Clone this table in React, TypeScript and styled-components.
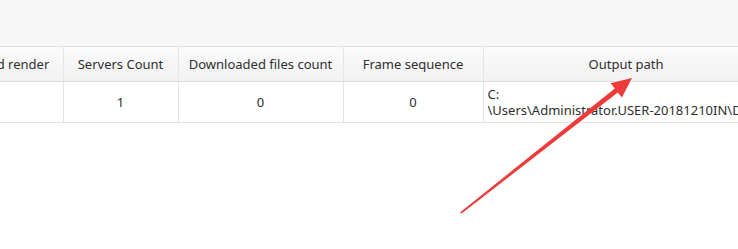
import styled, { createGlobalStyle } from "styled-components";

const GlobalStyle = createGlobalStyle`
  html, body {
    margin: 0;
    padding: 0;
    background: #ffffff;
  }
  body {
    font-family: "Noto Sans", "Open Sans", Arial, sans-serif;
    color: #333333;
  }
`;

const Page = styled.div`
  position: relative;
  width: 738px;
  height: 249px;
  overflow: hidden;
  background: #ffffff;
`;

const Toolbar = styled.div`
  height: 46px;
  background: #f7f7f7;
  border-bottom: 1px solid #e2e2e2;
`;

// the grid is scrolled sideways, so the first column is partly hidden
const TableWrap = styled.div`
  margin-left: -77px;
`;

const Table = styled.table<{ $w: number }>`
  width: ${(p) => p.$w}px;
  border-collapse: collapse;
  table-layout: fixed;
  font-size: 13px;
`;

const Th = styled.th`
  height: 34px;
  padding: 0 4px;
  font-weight: 400;
  color: #2e2e2e;
  text-align: center;
  white-space: nowrap;
  overflow: hidden;
  background: linear-gradient(#fbfbfb, #f1f1f1);
  border-right: 1px solid #e4e4e4;
  border-bottom: 1px solid #dcdcdc;
`;

const Td = styled.td<{ $left?: boolean }>`
  height: 40px;
  padding: 0 4px;
  text-align: ${(p) => (p.$left ? "left" : "center")};
  vertical-align: middle;
  line-height: 16px;
  color: #2e2e2e;
  white-space: nowrap;
  overflow: hidden;
  border-right: 1px solid #e4e4e4;
  border-bottom: 1px solid #e4e4e4;
`;

const PathText = styled.div`
  max-height: 32px;
  overflow: hidden;
`;

const Pointer = styled.svg`
  position: absolute;
  left: 0;
  top: 0;
  pointer-events: none;
`;

const columns = [
  { title: "Distributed render", width: 140 },
  { title: "Servers Count", width: 115 },
  { title: "Downloaded files count", width: 165 },
  { title: "Frame sequence", width: 140 },
  { title: "Output path", width: 286 },
];

const tableWidth = columns.reduce((sum, c) => sum + c.width, 0);

export default function App() {
  return (
    <Page>
      <GlobalStyle />
      <Toolbar />
      <TableWrap>
        <Table $w={tableWidth}>
          <colgroup>
            {columns.map((c) => (
              <col key={c.title} style={{ width: c.width }} />
            ))}
          </colgroup>
          <thead>
            <tr>
              {columns.map((c) => (
                <Th key={c.title}>{c.title}</Th>
              ))}
            </tr>
          </thead>
          <tbody>
            <tr>
              <Td />
              <Td>1</Td>
              <Td>0</Td>
              <Td>0</Td>
              <Td $left>
                <PathText>
                  C:
                  <br />
                  \Users\Administrator.USER-20181210IN\Desktop\output
                </PathText>
              </Td>
            </tr>
          </tbody>
        </Table>
      </TableWrap>
      <Pointer width="738" height="249" viewBox="0 0 738 249">
        <polygon
          points="460,212.4 614.8,88.4 610.7,83.3 632,78 621.9,97.5 617.8,92.4 461.6,213.6"
          fill="#ee3a3a"
        />
      </Pointer>
    </Page>
  );
}
